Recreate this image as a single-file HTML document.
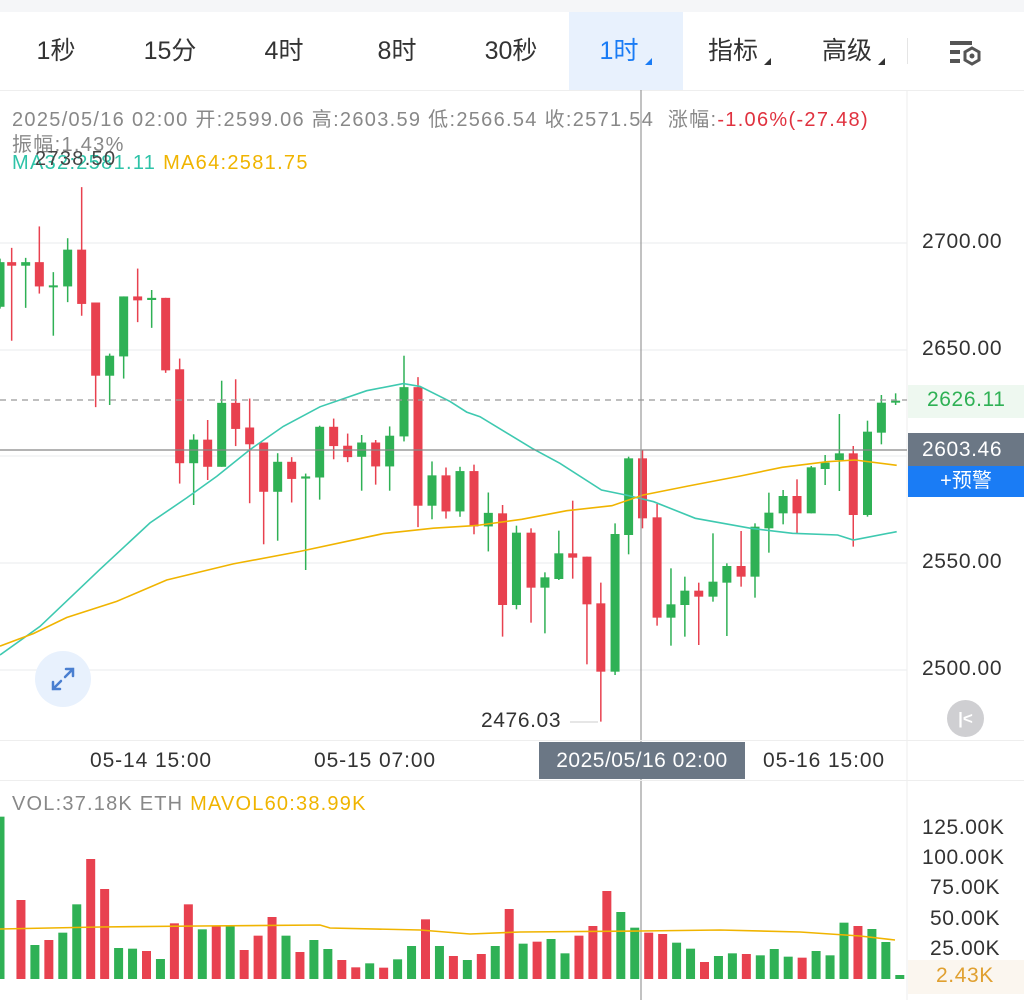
<!DOCTYPE html>
<html><head><meta charset="utf-8">
<style>
*{margin:0;padding:0;box-sizing:border-box}
body{width:1024px;height:1000px;overflow:hidden;background:#fff;font-family:"Liberation Sans","Noto Sans CJK SC",sans-serif;position:relative}
.abs{position:absolute;white-space:nowrap}
.tab{position:absolute;top:12px;height:78px;line-height:78px;font-size:25px;color:#333;text-align:center}
.tri{position:absolute;width:0;height:0;border-left:7px solid transparent;border-bottom:7px solid #333}
.ax{position:absolute;left:922px;font-size:21px;letter-spacing:0.6px;color:#333}
.dt{position:absolute;font-size:21px;letter-spacing:0.9px;color:#333;top:749px}
.hd{position:absolute;font-size:20px;letter-spacing:1.3px;color:#888;white-space:nowrap}
</style></head><body>
<div class="abs" style="left:0;top:0;width:1024px;height:12px;background:#f5f6f8"></div>
<div class="abs" style="left:569px;top:12px;width:114px;height:78px;background:#e8f1fd"></div>
<div class="tab" style="left:0;width:112px">1秒</div>
<div class="tab" style="left:114px;width:112px">15分</div>
<div class="tab" style="left:228px;width:112px">4时</div>
<div class="tab" style="left:341px;width:112px">8时</div>
<div class="tab" style="left:455px;width:112px">30秒</div>
<div class="tab" style="left:563px;width:112px;color:#1a7cf5">1时</div>
<div class="tri" style="left:645px;top:58px;border-bottom-color:#1a7cf5"></div>
<div class="tab" style="left:677px;width:112px">指标</div>
<div class="tri" style="left:764px;top:58px"></div>
<div class="tab" style="left:791px;width:112px">高级</div>
<div class="tri" style="left:878px;top:58px"></div>
<div class="abs" style="left:907px;top:38px;width:1px;height:26px;background:#e5e5e5"></div>
<svg class="abs" style="left:948px;top:38px" width="38" height="30" viewBox="0 0 38 30"><rect x="2" y="3" width="22" height="4" fill="#555"/><rect x="2" y="12" width="10" height="4" fill="#555"/><rect x="2" y="21" width="10" height="4" fill="#555"/><polygon points="24,10 31,14 31,22 24,26 17,22 17,14" fill="none" stroke="#555" stroke-width="3"/><circle cx="24" cy="18" r="2.5" fill="#555"/></svg>
<div class="abs" style="left:0;top:90px;width:1024px;height:1px;background:#eee"></div>

<div class="hd" style="left:12px;top:103px">2025/05/16 02:00 开:2599.06 高:2603.59 低:2566.54 收:2571.54 &nbsp;涨幅:<span style="color:#e0323f">-1.06%(-27.48)</span></div>
<div class="hd" style="left:12px;top:128px">振幅:1.43%</div>
<div class="hd" style="left:12px;top:152px;color:#2ec3a8">MA32:2581.11 <span style="color:#f0b400">MA64:2581.75</span></div>
<div class="hd" style="left:35px;top:148px;color:#444">2738.50</div>

<svg id="ch" class="abs" style="left:0;top:0" width="1024" height="1000"></svg>

<div class="abs" style="left:908px;top:385px;width:116px;height:33px;background:#eef8f0"></div>
<div class="ax" style="top:230px">2700.00</div>
<div class="ax" style="top:337px">2650.00</div>
<div class="ax" style="top:388px;left:927px;color:#2fb155">2626.11</div>
<div class="abs" style="left:908px;top:433px;width:116px;height:33px;background:#6b7785;color:#fff;font-size:21px;letter-spacing:0.6px;line-height:33px;padding-left:14px">2603.46</div>
<div class="abs" style="left:908px;top:466px;width:116px;height:31px;background:#1a7cf5;color:#fff;font-size:20px;line-height:31px;text-align:center">+预警</div>
<div class="ax" style="top:550px">2550.00</div>
<div class="ax" style="top:657px">2500.00</div>
<div class="abs" style="left:481px;top:709px;font-size:21px;letter-spacing:0.6px;color:#333">2476.03</div>
<div class="abs" style="left:35px;top:651px;width:56px;height:56px;border-radius:50%;background:#e8f1fd"></div>
<svg class="abs" style="left:47px;top:663px" width="32" height="32" viewBox="0 0 32 32" fill="none" stroke="#4a7fd0" stroke-width="2.5" stroke-linecap="round"><path d="M19 6h7v7M26 6l-8 8M6 19v7h7M6 26l8-8"/></svg>
<div class="abs" style="left:947px;top:700px;width:37px;height:37px;border-radius:50%;background:#cfcfd2;color:#fff;font-size:17px;font-weight:bold;line-height:37px;text-align:center">|&lt;</div>

<div class="abs" style="left:0;top:740px;width:1024px;height:1px;background:#eee"></div>
<div class="abs" style="left:0;top:780px;width:1024px;height:1px;background:#eee"></div>
<div class="dt" style="left:90px">05-14 15:00</div>
<div class="dt" style="left:314px">05-15 07:00</div>
<div class="abs" style="left:539px;top:742px;width:206px;height:37px;background:#6b7785;color:#fff;font-size:21px;letter-spacing:0.5px;line-height:37px;text-align:center">2025/05/16 02:00</div>
<div class="dt" style="left:763px">05-16 15:00</div>

<div class="hd" style="left:12px;top:793px;letter-spacing:1.2px">VOL:37.18K ETH <span style="color:#f0b400">MAVOL60:38.99K</span></div>
<div class="ax" style="top:816px;left:922px">125.00K</div>
<div class="ax" style="top:846px;left:922px">100.00K</div>
<div class="ax" style="top:876px;left:930px">75.00K</div>
<div class="ax" style="top:907px;left:930px">50.00K</div>
<div class="ax" style="top:937px;left:930px">25.00K</div>
<div class="abs" style="left:908px;top:960px;width:116px;height:34px;background:#fbf6ef"></div>
<div class="ax" style="top:964px;left:936px;color:#e0a030">2.43K</div>

<script>
var s=document.getElementById('ch'),h='';
var R='#e8414f',G='#2fb155';
function L(x1,y1,x2,y2,c,w,d){h+='<line x1="'+x1+'" y1="'+y1+'" x2="'+x2+'" y2="'+y2+'" stroke="'+c+'" stroke-width="'+(w||1)+'"'+(d?' stroke-dasharray="'+d+'"':'')+'/>';}
[243,350,456,563,670].forEach(function(y){L(0,y,907,y,'#f1f2f4',1.5)});
L(907,90,907,1000,'#eee',1);
var A=[[0,'g',230,355,220,360],[35,'r',230,240,190,450],[77,'g',230,240,218,358],[118,'r',230,298,130,318],[160,'g',295,299,258,436],[203,'g',195,298,163,342],[245,'r',195,347,20,380],[287,'r',343,548,343,636],[329,'g',492,548,486,630],[371,'g',326,494,326,556],[413,'r',326,337,248,398],[455,'g',330,336,308,414],[497,'r',330,533,330,540],[539,'r',530,793,500,850],[581,'g',727,793,712,910],[623,'r',727,803,672,840],[665,'g',624,803,562,803],[707,'r',624,697,558,745],[749,'r',693,740,612,905],[791,'r',735,873,735,1020],[833,'g',789,873,765,1010],[875,'r',789,837,776,903],[917,'g',830,836,822,1092],[959,'g',691,833,688,895],[1001,'r',691,745,668,782],[1043,'r',744,776,710,790],[1085,'g',735,775,714,870],[1127,'r',735,802,728,853],[1169,'g',716,802,690,870],[1212,'g',580,718,492,732],[1254,'r',580,912,552,972],[1296,'g',827,912,788,950],[1338,'r',827,928,805,948],[1380,'g',815,928,803,943],[1422,'r',815,970,797,992],[1465,'g',932,970,875,1040]];
var B=[[65,'r',460,735,435,830],[105,'g',518,735,497,748],[147,'r',518,683,505,788],[187,'g',652,683,637,820],[227,'g',580,657,512,660],[267,'r',580,593,422,656],[308,'r',590,733,590,913],[348,'r',730,935,668,1085],[389,'g',522,935,490,945],[428,'g',295,525,290,583],[468,'r',295,475,270,505],[510,'r',472,773,432,797],[550,'g',733,773,625,857],[590,'g',692,735,650,830],[630,'r',692,710,668,855],[671,'g',665,710,520,725],[711,'g',618,668,610,828],[752,'r',618,650,513,680],[792,'g',500,650,490,713],[832,'g',458,505,398,578],[873,'g',408,460,390,493],[913,'r',408,460,358,522],[954,'g',322,460,318,460],[994,'g',308,327,285,375],[1035,'g',280,300,162,393],[1075,'r',280,465,258,560],[1116,'g',215,465,182,470],[1156,'g',128,218,105,253],[1197,'g',122,128,100,135]];
function C(x,c,bt,bb,wt,wb){var col=c=='r'?R:G;L(x,wt,x,wb,col,1.5);var hh=Math.max(bb-bt,2);h+='<rect x="'+(x-4.5)+'" y="'+bt+'" width="9" height="'+hh+'" fill="'+col+'"/>';}
A.forEach(function(a){C(a[0]/3,a[1],180+a[2]/2.8,180+a[3]/2.8,180+a[4]/2.8,180+a[5]/2.8)});
B.forEach(function(a){C(480+a[0]/2.88,a[1],360+a[2]/3,360+a[3]/3,360+a[4]/3,360+a[5]/3)});
function P(p1,p2,c){var pts=p1.map(function(p){return (p[0]/3).toFixed(1)+','+(180+p[1]/2.8).toFixed(1)}).concat(p2.map(function(p){return (480+p[0]/2.88).toFixed(1)+','+(360+p[1]/3).toFixed(1)}));h+='<polyline points="'+pts.join(' ')+'" fill="none" stroke="'+c+'" stroke-width="1.6"/>';}
P([[0,1330],[120,1250],[300,1090],[450,960],[560,890],[650,830],[750,755],[850,690],[960,635],[1100,590],[1210,570],[1260,578],[1350,620],[1400,650]],[[0,170],[150,265],[230,310],[350,390],[420,405],[500,425],[620,475],[780,505],[900,520],[1030,525],[1075,540],[1200,515]],'#3ec9b0');
P([[0,1305],[100,1270],[200,1225],[350,1180],[500,1120],[700,1075],[900,1040],[1050,1010],[1150,990],[1300,975],[1420,968]],[[0,495],[120,478],[250,452],[380,437],[470,405],[600,378],[750,348],[870,322],[1000,305],[1080,300],[1200,316]],'#f0b400');
L(0,400,907,400,'#999',1.3,'6,5');
L(0,450,907,450,'#888',1.2);
L(641,90,641,1000,'#999',1.2);
L(570,722,598,722,'#ccc',1);
var V=[[80,'g'],[330,'r'],[465,'g'],[450,'r'],[428,'g'],[343,'g'],[207,'r'],[297,'r'],[474,'g'],[476,'g'],[483,'r'],[507,'g'],[400,'r'],[343,'r'],[418,'g'],[408,'r'],[405,'g'],[480,'r'],[437,'r'],[381,'r'],[437,'g'],[486,'r'],[450,'g'],[477,'g'],[510,'r'],[532,'r'],[520,'g'],[533,'r'],[508,'g'],[468,'g'],[388,'r'],[468,'g'],[498,'r'],[510,'g'],[492,'r'],[468,'g'],[357,'r'],[461,'g'],[455,'r'],[447,'g'],[490,'g'],[437,'r'],[408,'r'],[303,'r'],[366,'g'],[413,'g'],[428,'r'],[432,'r'],[458,'g'],[476,'g'],[516,'r'],[498,'g'],[490,'g'],[492,'r'],[496,'g'],[477,'g'],[500,'g'],[503,'r'],[483,'g'],[496,'g'],[398,'g'],[408,'r'],[417,'g'],[456,'g'],[555,'g']];
V.forEach(function(v,i){var x=i==0?0:(7+i*13.95);var y=790+v[0]/3;h+='<rect x="'+(x-4.5)+'" y="'+y+'" width="9" height="'+(979-y)+'" fill="'+(v[1]=='r'?R:G)+'"/>';});
h+='<polyline points="0,929 100,927 200,926 320,925 330,928 420,930 470,934 520,932 640,931 720,930 800,932 860,936 895,940" fill="none" stroke="#f0b400" stroke-width="1.6"/>';
s.innerHTML=h;
</script>
</body></html>
